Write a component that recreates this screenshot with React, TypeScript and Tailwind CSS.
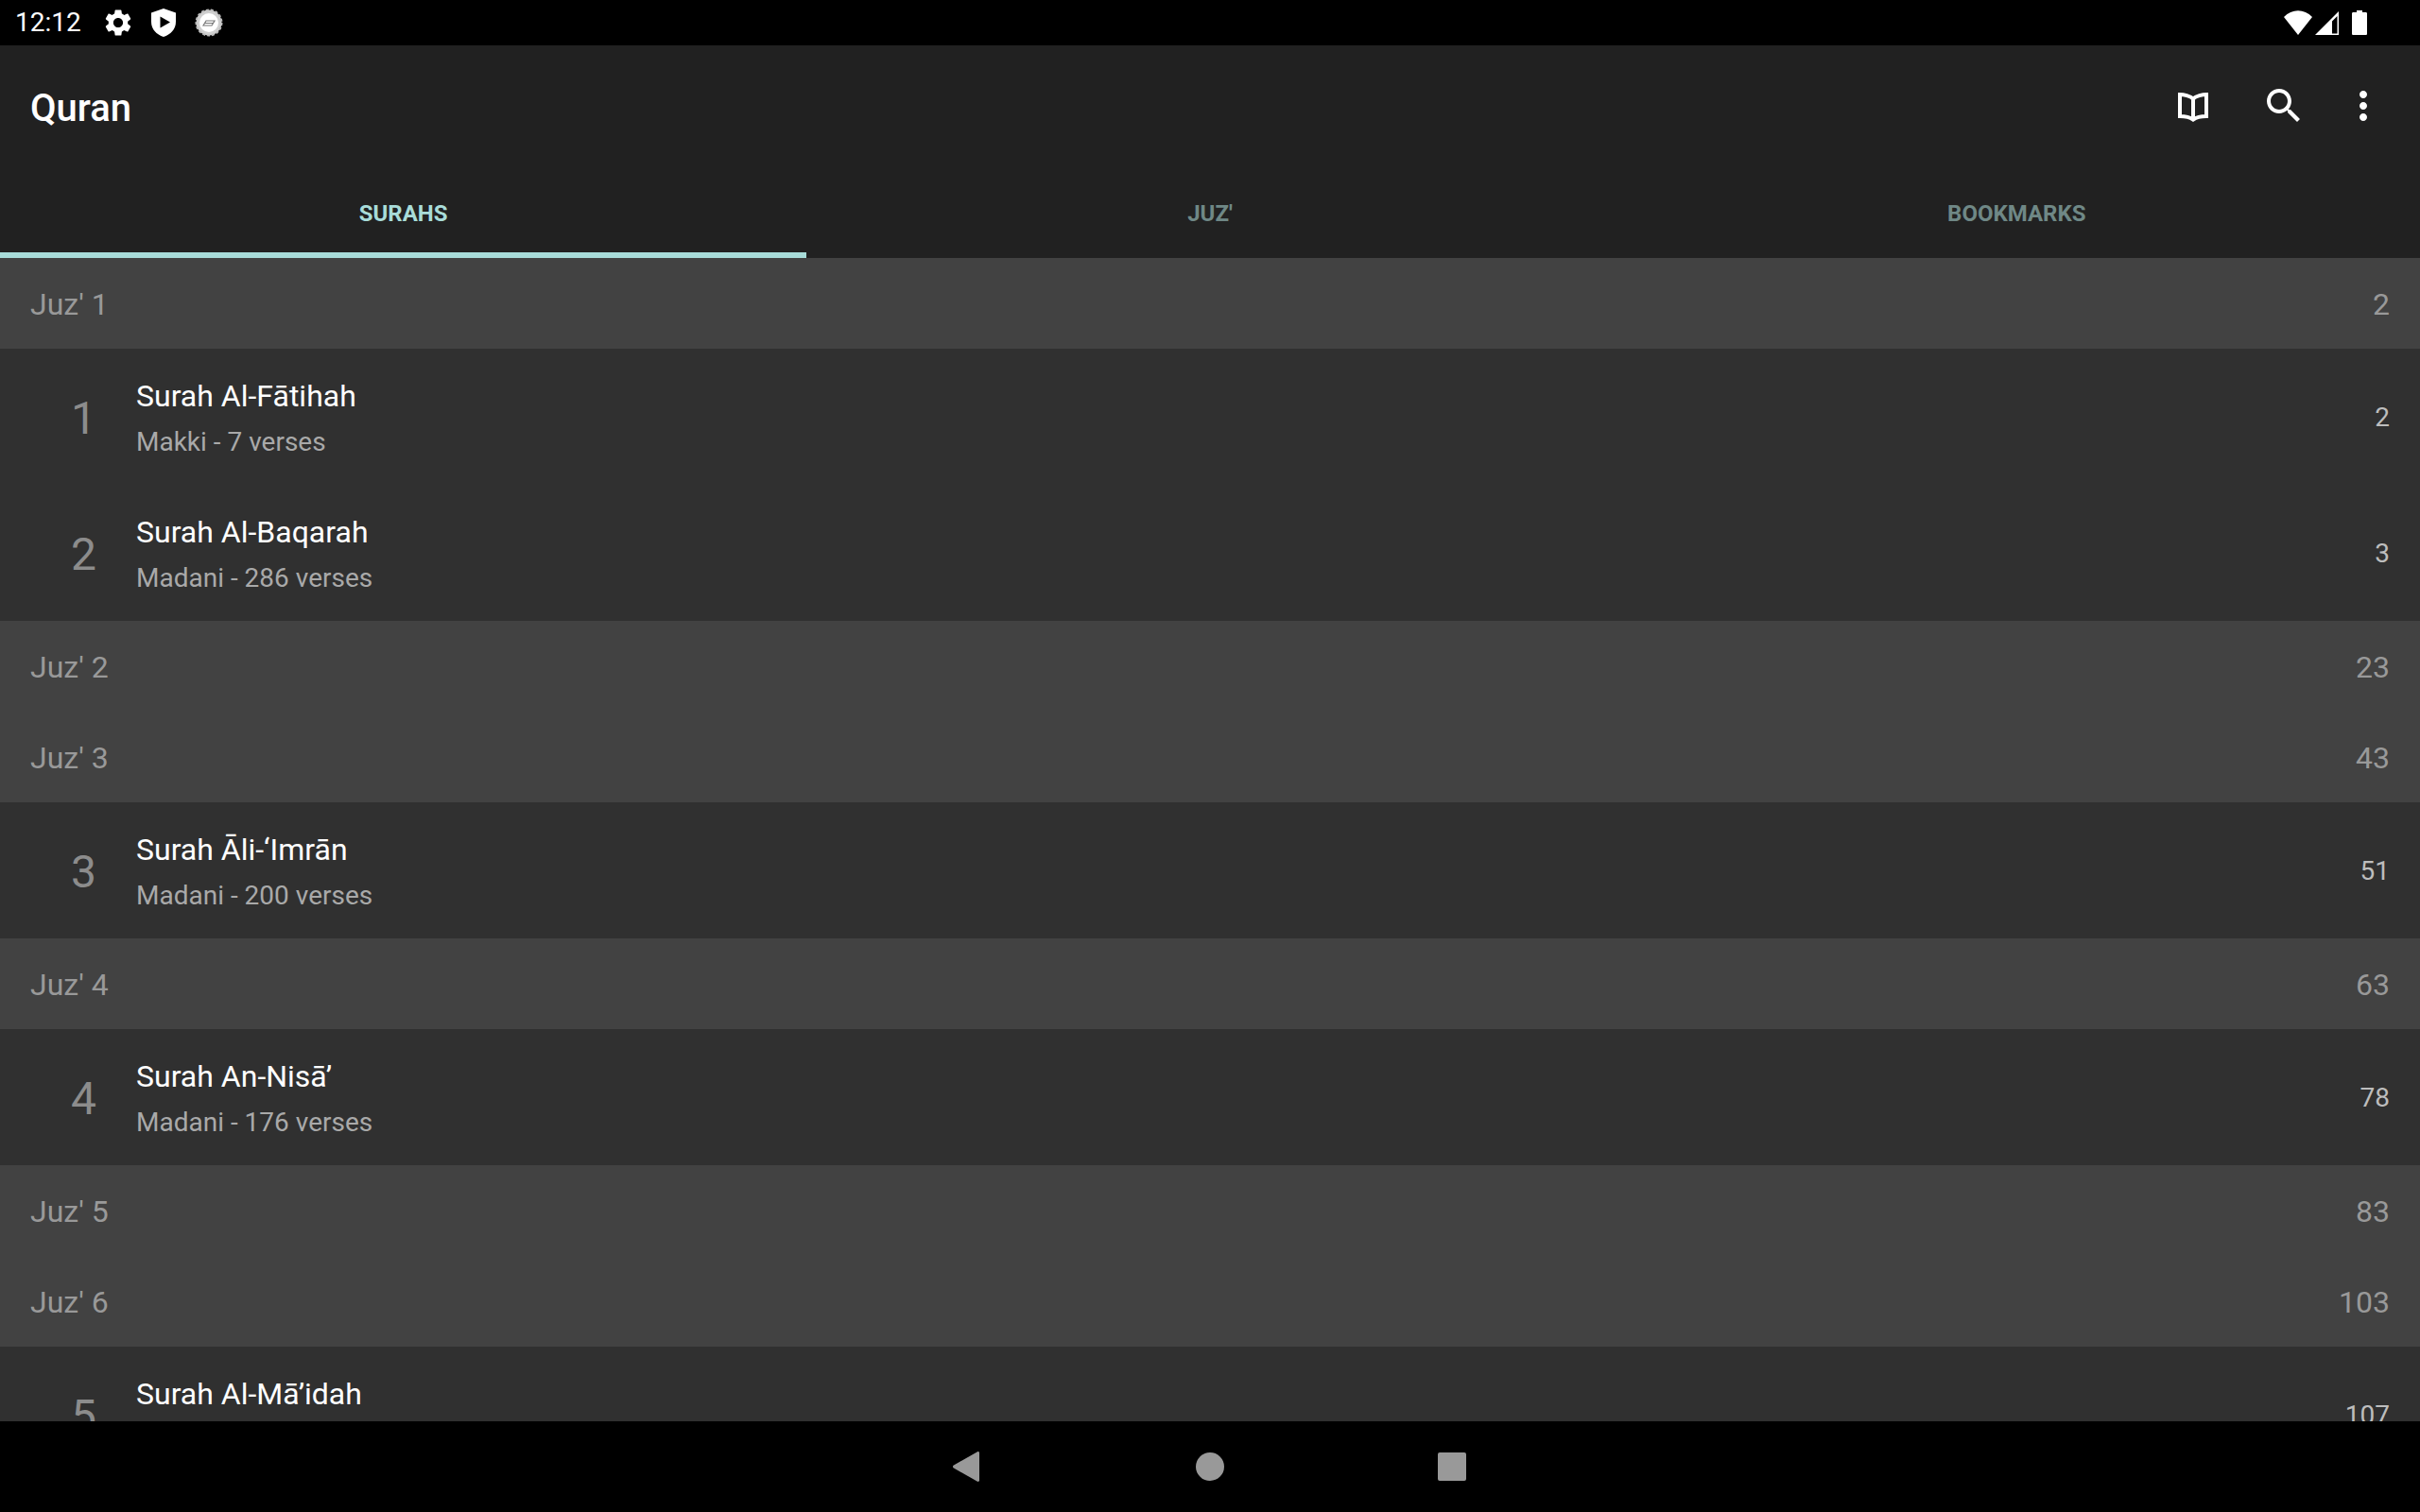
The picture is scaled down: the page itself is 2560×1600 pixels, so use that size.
const Header = ({ n, p }: { n: number; p: number }) => (
  <div className="flex h-[96px] shrink-0 items-center justify-between bg-[#424242] px-8 pt-[2px] text-[32px] text-[#999999]">
    <span>Juz' {n}</span>
    <span>{p}</span>
  </div>
);

const Row = ({ n, name, sub, p }: { n: number; name: string; sub: string; p: number }) => (
  <div className="flex h-[144px] shrink-0 items-center bg-[#303030] pl-[33px] pr-8">
    <div className="w-[111px] pt-[4px] text-center text-[48px] leading-none text-[#8c8c8c]">{n}</div>
    <div className="flex flex-1 flex-col pt-[4px]">
      <div className="text-[32px] leading-[48px] text-white">{name}</div>
      <div className="mt-[1px] text-[28px] leading-[48px] text-[#a9a9a9]">{sub}</div>
    </div>
    <div className="pt-[2px] text-[28px] text-[#bdbdbd]">{p}</div>
  </div>
);

export default function App() {
  return (
    <div className="flex h-[1600px] w-[2560px] flex-col overflow-hidden bg-black font-['Roboto',sans-serif]">
      <div className="flex h-[48px] shrink-0 items-center bg-black text-white">
        <span className="ml-[16px] text-[28px] leading-none">12:12</span>
        <svg className="ml-[22px] h-[34px] w-[34px]" viewBox="0 0 24 24" fill="#fff">
          <path fillRule="evenodd" d="M19.14,12.94c0.04-0.3,0.06-0.61,0.06-0.94c0-0.32-0.02-0.64-0.07-0.94l2.03-1.58c0.18-0.14,0.23-0.41,0.12-0.61 l-1.92-3.32c-0.12-0.22-0.37-0.29-0.59-0.22l-2.39,0.96c-0.5-0.38-1.03-0.7-1.62-0.94L14.4,2.81c-0.04-0.24-0.24-0.41-0.48-0.41 h-3.84c-0.24,0-0.43,0.17-0.47,0.41L9.25,5.35C8.66,5.59,8.12,5.92,7.63,6.29L5.24,5.33c-0.22-0.08-0.47,0-0.59,0.22L2.74,8.87 C2.62,9.08,2.66,9.34,2.86,9.48l2.03,1.58C4.84,11.36,4.8,11.69,4.8,12s0.02,0.64,0.07,0.94l-2.03,1.58 c-0.18,0.14-0.23,0.41-0.12,0.61l1.92,3.32c0.12,0.22,0.37,0.29,0.59,0.22l2.39-0.96c0.5,0.38,1.03,0.7,1.62,0.94l0.36,2.54 c0.05,0.24,0.24,0.41,0.48,0.41h3.84c0.24,0,0.44-0.17,0.47-0.41l0.36-2.54c0.59-0.24,1.13-0.56,1.62-0.94l2.39,0.96 c0.22,0.08,0.47,0,0.59-0.22l1.92-3.32c0.12-0.22,0.07-0.47-0.12-0.61L19.14,12.94z M12,15.6c-1.98,0-3.6-1.62-3.6-3.6 s1.62-3.6,3.6-3.6s3.6,1.62,3.6,3.6S13.98,15.6,12,15.6z" />
        </svg>
        <svg className="ml-[18px] h-[30px] w-[26px]" viewBox="0 0 26 30">
          <path fillRule="evenodd" fill="#fff" d="M13 0 L26 4.5 V14 C26 22 20.5 27.5 13 30 C5.5 27.5 0 22 0 14 V4.5 Z M9.5 8.5 V20.5 L20 14.5 Z" />
        </svg>
        <svg className="ml-[20px] h-[30px] w-[30px]" viewBox="0 0 30 30">
          <circle cx="15" cy="15" r="13.5" fill="#cfcfcf" stroke="#bbb" strokeWidth="2" strokeDasharray="3 2" />
          <circle cx="15" cy="15" r="10" fill="#fff" />
          <path d="M9 18 L12 13 H21 L18 18 Z M11 15.5 H20" stroke="#777" strokeWidth="1.2" fill="none" />
        </svg>
        <div className="flex-1" />
        <svg className="h-[26px] w-[30px]" viewBox="0 0 30 26" fill="#fff">
          <path d="M0 7 C8.5 -2 21.5 -2 30 7 L15 26 Z" />
        </svg>
        <svg className="ml-[3px] h-[25px] w-[25px]" viewBox="0 0 25 25">
          <path fillRule="evenodd" fill="#fff" d="M25 0 V25 H0 Z M23.5 5 L18 10.5 V23.5 H23.5 Z" />
        </svg>
        <svg className="ml-[14px] mr-[56px] h-[26px] w-[16px]" viewBox="0 0 16 26" fill="#fff">
          <path d="M5 0 H11 V2 H14.5 C15.5 2 16 2.5 16 3.5 V24.5 C16 25.5 15.5 26 14.5 26 H1.5 C0.5 26 0 25.5 0 24.5 V3.5 C0 2.5 0.5 2 1.5 2 H5 Z" />
        </svg>
      </div>

      <div className="flex h-[128px] shrink-0 items-center bg-[#212121] pl-8 pr-[36px]">
        <span className="mt-[6px] flex-1 text-[40px] font-medium text-white">Quran</span>
        <svg className="h-[48px] w-[48px]" viewBox="0 0 48 48" fill="none" stroke="#fff" strokeWidth="4">
          <path d="M24 16.5 C21 13.5 14 12 10 12 H10 V35 C15 35 20.5 36 24 38.5 C27.5 36 33 35 38 35 V12 C34 12 27 13.5 24 16.5 Z M24 16.5 V38" />
        </svg>
        <svg className="ml-[48px] h-[48px] w-[48px]" viewBox="0 0 24 24" fill="#fff">
          <path d="M15.5 14h-.79l-.28-.27C15.41 12.59 16 11.11 16 9.5 16 5.91 13.09 3 9.5 3S3 5.91 3 9.5 5.91 16 9.5 16c1.61 0 3.09-.59 4.23-1.57l.27.28v.79l5 4.99L20.49 19l-4.99-5zm-6 0C7.01 14 5 11.99 5 9.5S7.01 5 9.5 5 14 7.01 14 9.5 11.99 14 9.5 14z" />
        </svg>
        <svg className="ml-[36px] h-[48px] w-[48px]" viewBox="0 0 24 24" fill="#fff">
          <path d="M12 8c1.1 0 2-.9 2-2s-.9-2-2-2-2 .9-2 2 .9 2 2 2zm0 2c-1.1 0-2 .9-2 2s.9 2 2 2 2-.9 2-2-.9-2-2-2zm0 6c-1.1 0-2 .9-2 2s.9 2 2 2 2-.9 2-2-.9-2-2-2z" />
        </svg>
      </div>

      <div className="flex h-[97px] shrink-0 bg-[#212121] text-[24px] font-bold">
        <div className="flex flex-1 items-center justify-center border-b-[6px] border-[#a8dcd9] pt-[8px] text-[#a8dcd9]">SURAHS</div>
        <div className="flex flex-1 items-center justify-center border-b-[6px] border-transparent pt-[8px] text-[#6f8886]">JUZ'</div>
        <div className="flex flex-1 items-center justify-center border-b-[6px] border-transparent pt-[8px] text-[#6f8886]">BOOKMARKS</div>
      </div>

      <div className="flex flex-1 flex-col overflow-hidden bg-[#303030]">
        <Header n={1} p={2} />
        <Row n={1} name="Surah Al-Fātihah" sub="Makki - 7 verses" p={2} />
        <Row n={2} name="Surah Al-Baqarah" sub="Madani - 286 verses" p={3} />
        <Header n={2} p={23} />
        <Header n={3} p={43} />
        <Row n={3} name="Surah Āli-‘Imrān" sub="Madani - 200 verses" p={51} />
        <Header n={4} p={63} />
        <Row n={4} name="Surah An-Nisā’" sub="Madani - 176 verses" p={78} />
        <Header n={5} p={83} />
        <Header n={6} p={103} />
        <Row n={5} name="Surah Al-Mā’idah" sub="Madani - 120 verses" p={107} />
      </div>

      <div className="flex h-[96px] shrink-0 items-center justify-center bg-black pr-[2px]">
        <svg className="mr-[229px] h-[32px] w-[28px]" viewBox="0 0 28 32" fill="#999">
          <path d="M0.5 14.8 L26 0.2 C27 -0.2 28 0.4 28 1.5 V30.5 C28 31.6 27 32.2 26 31.8 L0.5 17.2 C-0.2 16.6 -0.2 15.4 0.5 14.8 Z" />
        </svg>
        <div className="mr-[226px] h-[30px] w-[30px] rounded-full bg-[#999]" />
        <div className="h-[30px] w-[30px] rounded-[2px] bg-[#999]" />
      </div>
    </div>
  );
}
